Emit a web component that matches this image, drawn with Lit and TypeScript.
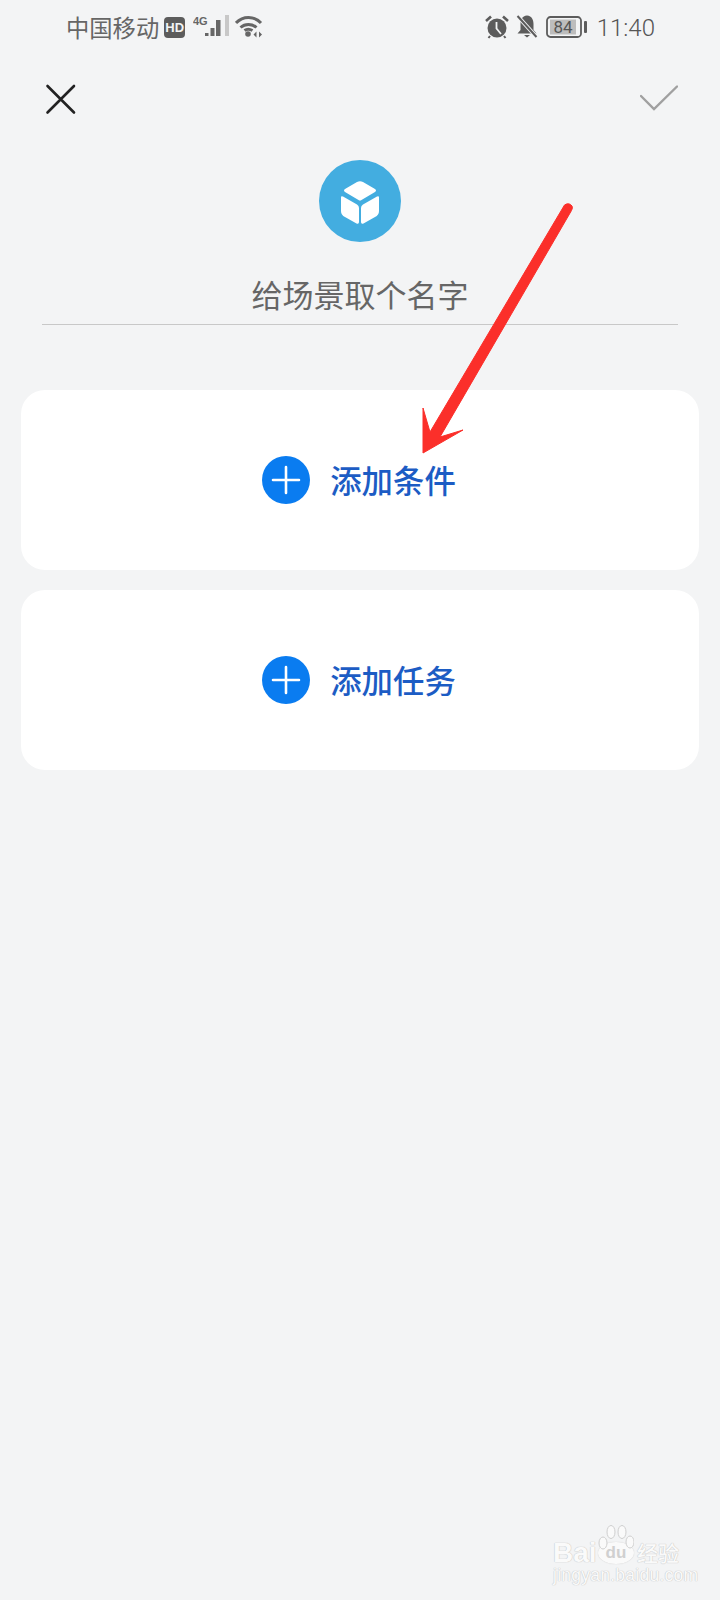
import { LitElement, html, css, svg } from "lit";
import { customElement } from "lit/decorators.js";

@customElement("app-root")
export class AppRoot extends LitElement {
  static styles = css`
    :host { display: block; width: 720px; height: 1600px; background: #f3f4f5; position: relative; overflow: hidden; font-family: "Noto Sans CJK SC", "Noto Sans", sans-serif; }
    .status { display: flex; align-items: center; height: 56px; box-sizing: border-box; padding: 0 65px 2px 66px; color: #666; }
    .carrier { font-size: 23.3px; line-height: 28px; }
    .hd { margin-left: 5px; width: 21px; height: 21px; border-radius: 4px; background: #5c5c5c; color: #f3f4f5; font: 700 13px/21px "Liberation Sans", sans-serif; text-align: center; }
    .sig { margin-left: 8px; display: block; }
    .wifi { margin-left: 6px; display: block; }
    .spacer { flex: 1; }
    .alarm { display: block; }
    .bell { display: block; margin-left: 7px; }
    .batt { display: block; margin-left: 8px; }
    .time { margin: 2px 0 0 9px; font: 300 24px/28px Roboto, sans-serif; color: #555; }
    .bar { display: flex; justify-content: space-between; align-items: center; padding: 27px 42px 0 44px; height: 34px; }
    .bar svg { display: block; }
    .scene { display: flex; flex-direction: column; align-items: center; margin-top: 43px; }
    .avatar { width: 82px; height: 82px; border-radius: 50%; background: #43ade0; display: flex; align-items: center; justify-content: center; }
    .cube { display: block; margin-top: 3px; }
    .name { margin-top: 29px; width: 636px; height: 54px; box-sizing: border-box; border-bottom: 1px solid #c8c8c8; text-align: center; font-size: 31px; line-height: 46px; color: #666; }
    .cards { display: flex; flex-direction: column; gap: 20px; margin: 65px 21px 0; }
    .card { height: 180px; border-radius: 24px; background: #fff; display: flex; align-items: center; justify-content: center; gap: 20px; padding-right: 2px; box-sizing: border-box; }
    .plus { width: 48px; height: 48px; border-radius: 50%; background: #0a7cf0; display: block; }
    .label { font-size: 31.4px; line-height: 44px; font-weight: 500; color: #1c5cc4; }
    .arrow { position: absolute; left: 0; top: 0; pointer-events: none; }
    .mark { position: absolute; left: 553px; top: 1540px; width: 130px; display: flex; flex-direction: column; gap: 3px; color: #fafafa; text-shadow: 0 0 1px #c4c4c4, 0 0 1px #c4c4c4; }
    .mark-row { display: flex; align-items: center; height: 25px; }
    .bai { font: 700 28px/25px "Liberation Sans", sans-serif; width: 45px; }
    .du { position: relative; width: 36px; height: 22px; border-radius: 50%; background: #fafafa; color: #d0d0d0; text-shadow: none; font: 700 17px/21px "Liberation Sans", sans-serif; text-align: center; box-shadow: 0 0 1px #c4c4c4; }
    .paw { position: absolute; left: 0; top: -18px; display: block; }
    .cn { margin-left: 3px; font-size: 21px; line-height: 25px; font-weight: 500; }
    .url { font: 400 17.5px/15px "Liberation Sans", sans-serif; letter-spacing: .25px; white-space: nowrap; }
  `;

  render() {
    return html`
      <div class="status">
        <span class="carrier">中国移动</span>
        <span class="hd">HD</span>
        <svg class="sig" width="36" height="24" viewBox="0 0 36 24">
          <text x="0" y="10" font-family="Liberation Sans" font-weight="700" font-size="11" fill="#666">4G</text>
          <g fill="#666"><rect x="12" y="18" width="3.5" height="3"/><rect x="17.5" y="13" width="4" height="8"/><rect x="23" y="5" width="4.5" height="16"/></g>
          <rect x="32" y="0" width="4" height="21" fill="#c8c8c8"/>
        </svg>
        <svg class="wifi" width="28" height="24" viewBox="0 0 28 24" fill="none" stroke="#666" stroke-width="3">
          <path d="M1 8 C8 0.5 19 0.5 26 8"/><path d="M5.5 12.5 C10 8.5 17 8.5 21.5 12.5"/><path d="M9.5 15.5 C11.5 14 15 14 17.5 15.5"/>
          <circle cx="13" cy="19" r="2.8" fill="#666" stroke="none"/>
          <path d="M21.5 16.5 l-3 3 l3 3z M24 16.5 l3 3 l-3 3z" fill="#666" stroke="none"/>
        </svg>
        <span class="spacer"></span>
        <svg class="alarm" width="24" height="24" viewBox="0 0 24 24">
          <circle cx="12" cy="13" r="9.5" fill="#5c5c5c"/>
          <path d="M11.5 7 V13.5 L16 19" fill="none" stroke="#f3f4f5" stroke-width="1.8"/>
          <path d="M1 6 L6 1.5 M23 6 L18 1.5" stroke="#5c5c5c" stroke-width="2.6"/>
          <path d="M5 21 L3.5 23 M19 21 L20.5 23" stroke="#5c5c5c" stroke-width="2"/>
        </svg>
        <svg class="bell" width="22" height="24" viewBox="0 0 22 24">
          <path d="M11 0.5 C6 1 4.5 5 4.5 9 V15 L1.5 18.5 H20.5 L17.5 15 V9 C17.5 5 16 1 11 0.5Z" fill="#5c5c5c"/>
          <path d="M8 20 H14 L11 22.5Z" fill="#5c5c5c"/>
          <path d="M1.5 1 L20.5 22" stroke="#f3f4f5" stroke-width="4"/>
          <path d="M1.5 1 L20.5 22" stroke="#5c5c5c" stroke-width="2"/>
        </svg>
        <svg class="batt" width="42" height="22" viewBox="0 0 42 22">
          <rect x="1" y="1" width="34" height="20" rx="3.5" fill="none" stroke="#5c5c5c" stroke-width="1.8"/>
          <rect x="4" y="3.5" width="26" height="15" fill="#bdbdbd"/>
          <rect x="38" y="5" width="3" height="12" rx="1" fill="#5c5c5c"/>
          <text x="17" y="17" text-anchor="middle" font-family="Roboto" font-size="17" fill="#555">84</text>
        </svg>
        <span class="time">11:40</span>
      </div>

      <div class="bar">
        <svg width="32" height="32" viewBox="0 0 32 32" fill="none" stroke="#222" stroke-width="2.6" stroke-linecap="round">
          <path d="M3.5 2 L30 28.5 M30 2 L3.5 28.5"/>
        </svg>
        <svg width="38" height="30" viewBox="0 0 38 30" fill="none" stroke="#a0a0a0" stroke-width="2.4" stroke-linecap="round">
          <path d="M1 11 L14 24 L37 1.5"/>
        </svg>
      </div>

      <div class="scene">
        <div class="avatar">
          <svg class="cube" width="38" height="44" viewBox="0 0 38 44" fill="#fff">
            <path d="M16 1 Q19 -0.5 22 1 L34 8 Q36 9.5 34 11 L20.5 19 Q19 20 17.5 19 L4 11 Q2 9.5 4 8Z"/>
            <path d="M0 16.5 Q0 14.5 2 15.5 L16 23.5 Q18 24.5 18 27 V41 Q18 43.5 15.5 42.5 L4 36 Q0 34 0 30Z"/>
            <path d="M38 16.5 Q38 14.5 36 15.5 L22 23.5 Q20 24.5 20 27 V41 Q20 43.5 22.5 42.5 L34 36 Q38 34 38 30Z"/>
          </svg>
        </div>
        <div class="name">给场景取个名字</div>
      </div>

      <div class="cards">
        ${["添加条件", "添加任务"].map(
          (t) => html`<div class="card">
            <svg class="plus" viewBox="0 0 48 48"><path d="M24 11 V37 M11 24 H37" stroke="#fff" stroke-width="2.6" stroke-linecap="round"/></svg>
            <span class="label">${t}</span>
          </div>`
        )}
      </div>

      <svg class="arrow" width="720" height="1600" viewBox="0 0 720 1600">
        ${svg`<path d="M564.5 205 Q569 202 572 206 Q573 208 571.5 210.5 L440 437 L463 430 L423 453 L423 408 L430 432 Z" fill="#fb2f2a" stroke="#fb2f2a" stroke-width="1" stroke-linejoin="round"/>`}
      </svg>

      <div class="mark">
        <div class="mark-row">
          <span class="bai">Bai</span>
          <span class="du">du
            <svg class="paw" width="36" height="28" viewBox="0 0 36 28" fill="#fafafa" stroke="#cfcfcf" stroke-width="1">
              <ellipse cx="5" cy="19" rx="4" ry="6"/><ellipse cx="13" cy="8" rx="4" ry="6.5"/><ellipse cx="24" cy="8" rx="4" ry="6.5"/><ellipse cx="32" cy="18" rx="4" ry="6"/>
            </svg>
          </span>
          <span class="cn">经验</span>
        </div>
        <div class="url">jingyan.baidu.com</div>
      </div>
    `;
  }
}
